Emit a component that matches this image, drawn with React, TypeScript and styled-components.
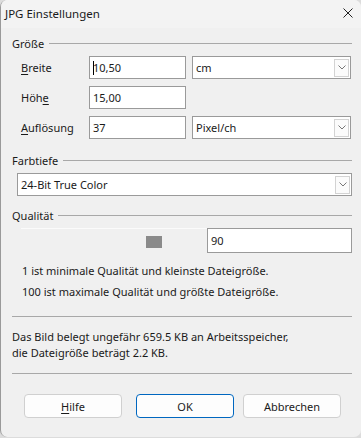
import styled, { createGlobalStyle } from "styled-components";

const GlobalStyle = createGlobalStyle`
  html, body {
    margin: 0;
    padding: 0;
    background: #dcdcdc;
  }
  * {
    box-sizing: border-box;
  }
`;

const Window = styled.div`
  width: 361px;
  height: 437px;
  background: #f0f0f0;
  border-left: 1px solid #9a9a9a;
  border-radius: 7px;
  overflow: hidden;
  font-family: "Noto Sans", "Open Sans", sans-serif;
  font-size: 11px;
  color: #1a1a1a;
  display: flex;
  flex-direction: column;
`;

const TitleBar = styled.div`
  height: 28px;
  flex: none;
  display: flex;
  align-items: center;
  justify-content: space-between;
  padding: 0 8px 2px 4px;
  background: #f3f3f3;
  font-size: 11.5px;
`;

const Close = styled.svg`
  width: 10px;
  height: 10px;
`;

const Content = styled.div`
  display: flex;
  flex-direction: column;
  padding: 8px 9px 0 11px;
`;

const FrameHead = styled.div<{ $mt?: number }>`
  display: flex;
  align-items: center;
  gap: 5px;
  height: 14px;
  margin-top: ${(p) => p.$mt ?? 0}px;
`;

const Line = styled.div`
  flex: 1;
  height: 1px;
  background: #a8a8a8;
`;

const SizeGrid = styled.div`
  display: grid;
  grid-template-columns: 62px 97px 159px;
  grid-auto-rows: 23px;
  row-gap: 7px;
  column-gap: 6px;
  margin: 6px 0 0 9px;
  align-items: center;
`;

const Label = styled.span``;

const Key = styled.span`
  text-decoration: underline;
  text-underline-offset: 2px;
`;

const Field = styled.div<{ $h?: number }>`
  height: ${(p) => p.$h ?? 23}px;
  background: #fff;
  border: 1px solid #9a9a9a;
  display: flex;
  align-items: center;
  padding-left: 3px;
`;

const Caret = styled.span`
  display: inline-block;
  width: 1px;
  height: 14px;
  background: #000;
  margin-right: -1px;
`;

const Select = styled(Field)`
  justify-content: space-between;
  padding-right: 1px;
`;

const DropBtn = styled.div`
  width: 15px;
  height: 18px;
  border: 1px solid #d3d3d3;
  background: #fbfbfb;
  display: flex;
  align-items: center;
  justify-content: center;
`;

const WideSelect = styled(Select)`
  margin: 6px 0 0 5px;
`;

const QualRow = styled.div`
  display: flex;
  margin: 6px 0 0 9px;
  height: 25px;
`;

const Track = styled.div`
  position: relative;
  flex: 1;
  border-top: 1px solid #fbfbfb;
`;

const Thumb = styled.div`
  position: absolute;
  left: 125px;
  top: 7px;
  width: 16px;
  height: 12px;
  background: #8a8a8a;
`;

const QualField = styled(Field)`
  width: 145px;
  height: 25px;
`;

const Hints = styled.div`
  margin: 7px 0 0 10px;
  line-height: 21px;
`;

const Separator = styled.div<{ $mt: number }>`
  height: 1px;
  background: #a8a8a8;
  margin-top: ${(p) => p.$mt}px;
`;

const Info = styled.div`
  margin-top: 12px;
  line-height: 16px;
`;

const ButtonBar = styled.div`
  display: flex;
  padding: 20px 0 0 12px;
`;

const Button = styled.div<{ $primary?: boolean; $ml?: number }>`
  width: 98px;
  height: 24px;
  margin-left: ${(p) => p.$ml ?? 0}px;
  border-radius: 4px;
  background: #fdfdfd;
  border: 1px solid ${(p) => (p.$primary ? "#0067c0" : "#d0d0d0")};
  display: flex;
  align-items: center;
  justify-content: center;
`;

function Chevron() {
  return (
    <svg width="8" height="5" viewBox="0 0 8 5">
      <path d="M0.5 0.5 L4 4 L7.5 0.5" fill="none" stroke="#777" strokeWidth="1" />
    </svg>
  );
}

export default function App() {
  return (
    <>
      <GlobalStyle />
      <Window>
        <TitleBar>
          <span>JPG Einstellungen</span>
          <Close viewBox="0 0 10 10">
            <path d="M0.5 0.5 L9.5 9.5 M9.5 0.5 L0.5 9.5" stroke="#222" strokeWidth="1" />
          </Close>
        </TitleBar>
        <Content>
          <FrameHead>
            <span>Größe</span>
            <Line />
          </FrameHead>
          <SizeGrid>
            <Label>
              <Key>B</Key>reite
            </Label>
            <Field>
              <Caret />
              10,50
            </Field>
            <Select>
              cm
              <DropBtn>
                <Chevron />
              </DropBtn>
            </Select>
            <Label>
              Höh<Key>e</Key>
            </Label>
            <Field>15,00</Field>
            <span />
            <Label>
              <Key>A</Key>uflösung
            </Label>
            <Field>37</Field>
            <Select>
              Pixel/ch
              <DropBtn>
                <Chevron />
              </DropBtn>
            </Select>
          </SizeGrid>

          <FrameHead $mt={14}>
            <span>Farbtiefe</span>
            <Line />
          </FrameHead>
          <WideSelect>
            24-Bit True Color
            <DropBtn>
              <Chevron />
            </DropBtn>
          </WideSelect>

          <FrameHead $mt={12}>
            <span>Qualität</span>
            <Line />
          </FrameHead>
          <QualRow>
            <Track>
              <Thumb />
            </Track>
            <QualField>90</QualField>
          </QualRow>
          <Hints>
            <div>1 ist minimale Qualität und kleinste Dateigröße.</div>
            <div>100 ist maximale Qualität und größte Dateigröße.</div>
          </Hints>

          <Separator $mt={14} />
          <Info>
            <div>Das Bild belegt ungefähr 659.5 KB an Arbeitsspeicher,</div>
            <div>die Dateigröße beträgt 2.2 KB.</div>
          </Info>
          <Separator $mt={12} />

          <ButtonBar>
            <Button>
              <span>
                <Key>H</Key>ilfe
              </span>
            </Button>
            <Button $primary $ml={14}>
              OK
            </Button>
            <Button $ml={9}>Abbrechen</Button>
          </ButtonBar>
        </Content>
      </Window>
    </>
  );
}
